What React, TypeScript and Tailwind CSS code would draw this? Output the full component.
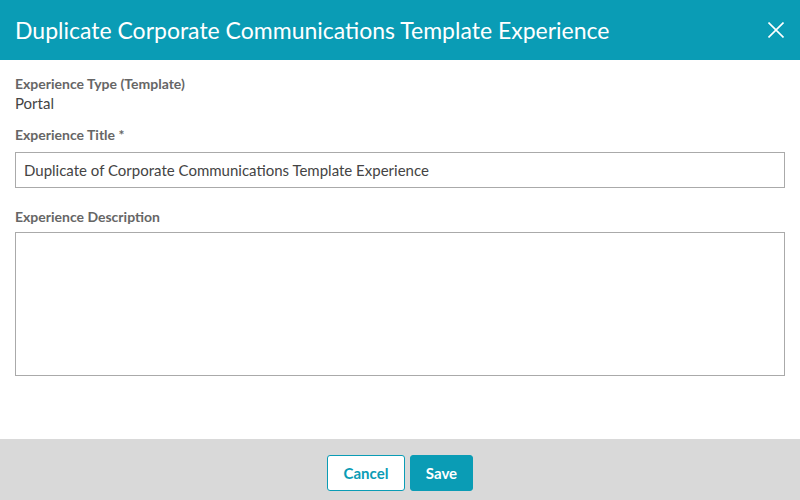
import React from "react";

export default function App() {
  return (
    <div
      className="w-[800px] h-[500px] flex flex-col bg-white overflow-hidden"
      style={{ fontFamily: "Lato, 'Open Sans', sans-serif" }}
    >
      <div className="h-[60px] shrink-0 bg-[#0a9cb5] flex items-center justify-between pl-[15px] pr-[16px]">
        <h1 className="text-white text-[23px] leading-none">
          Duplicate Corporate Communications Template Experience
        </h1>
        <button className="w-4 h-4 flex items-center justify-center text-white">
          <svg width="16" height="16" viewBox="0 0 16 16" fill="none" stroke="white" strokeWidth="1.6">
            <path d="M0.5 0.5 L15.5 15.5 M15.5 0.5 L0.5 15.5" />
          </svg>
        </button>
      </div>
      <div className="flex-1 px-[15px] pt-[15px]">
        <div className="text-[14px] leading-[18px] font-bold text-[#666]">Experience Type (Template)</div>
        <div className="text-[15px] leading-[18px] text-[#444] mt-[1px]">Portal</div>
        <div className="text-[14px] leading-[18px] font-bold text-[#666] mt-[14px]">Experience Title *</div>
        <div className="mt-[8px] h-[36px] border border-[#aaa] flex items-center px-2 text-[15px] text-[#444]">
          Duplicate of Corporate Communications Template Experience
        </div>
        <div className="text-[14px] leading-[18px] font-bold text-[#666] mt-[20px]">Experience Description</div>
        <div className="mt-[6px] h-[144px] border border-[#aaa]"></div>
      </div>
      <div className="h-[61px] shrink-0 bg-[#d9d9d9] flex justify-center items-start pt-4 gap-[5px]">
        <button className="h-[36px] w-[78px] bg-white border border-[#0a9cb5] rounded-[3px] text-[#0a9cb5] font-bold text-[15px]">
          Cancel
        </button>
        <button className="h-[36px] w-[63px] bg-[#0a9cb5] border border-[#0a9cb5] rounded-[3px] text-white font-bold text-[15px]">
          Save
        </button>
      </div>
    </div>
  );
}
